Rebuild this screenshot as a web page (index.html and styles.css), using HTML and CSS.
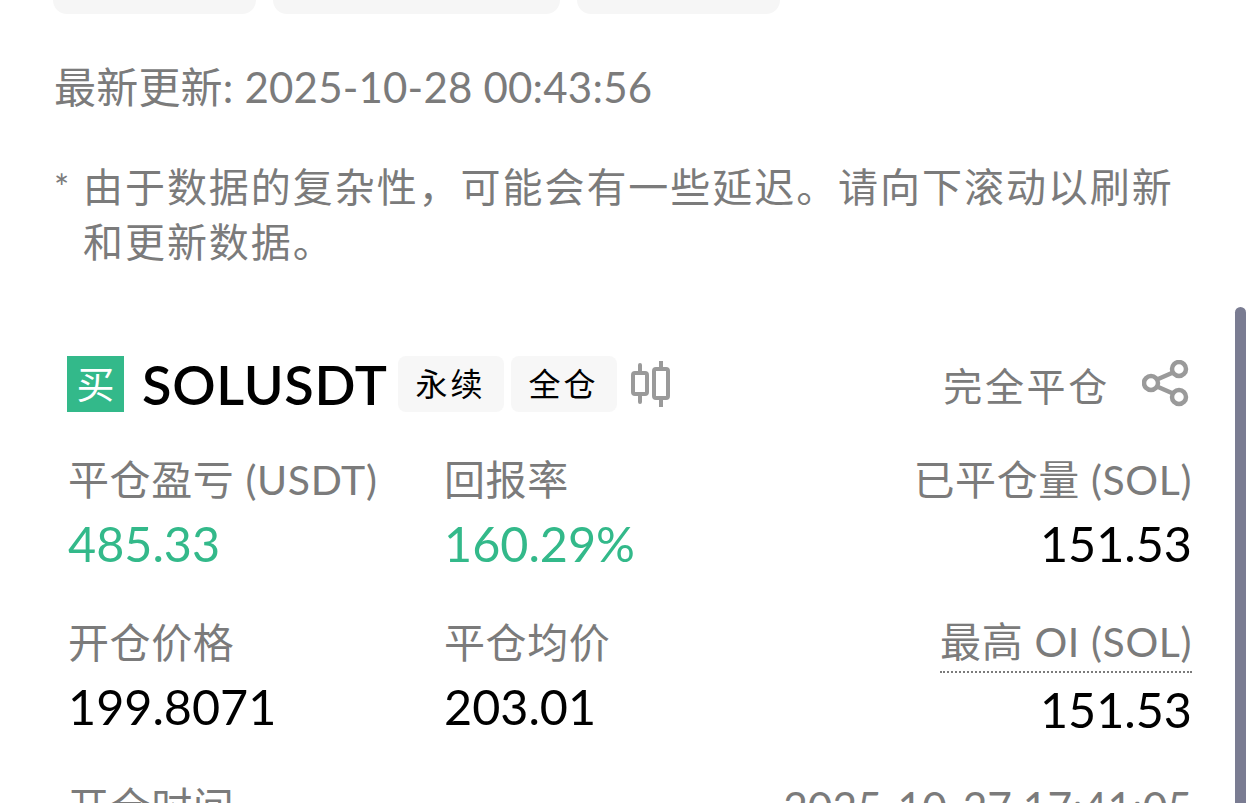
FILE: index.html
```html
<!DOCTYPE html>
<html lang="zh-CN">
<head>
  <meta charset="UTF-8" />
  <title>平仓详情</title>
  <link rel="stylesheet" href="styles.css">
</head>
<body>
  <div class="tabs">
    <div class="tab tab-a"></div>
    <div class="tab tab-b"></div>
    <div class="tab tab-a"></div>
  </div>

  <p class="updated">最新更新: 2025-10-28 00:43:56</p>

  <div class="note">
    <span class="star">*</span>
    <p>由于数据的复杂性，可能会有一些延迟。请向下滚动以刷新和更新数据。</p>
  </div>

  <div class="card">
    <div class="head">
      <span class="side">买</span>
      <span class="symbol">SOLUSDT</span>
      <span class="chip">永续</span>
      <span class="chip">全仓</span>
      <svg class="candle" width="42" height="46" viewBox="0 0 42 46" fill="none" stroke="#9a9a9a" stroke-width="4">
        <path d="M10 4v8M10 33v8M31 0v8M31 37v9" stroke-linecap="round"/>
        <rect x="3" y="12" width="14" height="21" rx="2"/>
        <rect x="24" y="8" width="14" height="29" rx="2"/>
      </svg>
      <span class="close-all">完全平仓</span>
      <svg class="share" width="48" height="48" viewBox="0 0 48 48" fill="none" stroke="#9a9a9a" stroke-width="4.5">
        <circle cx="37" cy="9" r="7"/>
        <circle cx="37" cy="37" r="7"/>
        <circle cx="9" cy="23" r="7"/>
        <path d="M15 19.5 31 12.5M15 26.5 31 33.5"/>
      </svg>
    </div>

    <div class="stats">
      <div class="stat">
        <span class="label">平仓盈亏 (USDT)</span>
        <span class="value up">485.33</span>
      </div>
      <div class="stat">
        <span class="label">回报率</span>
        <span class="value up">160.29%</span>
      </div>
      <div class="stat right">
        <span class="label">已平仓量 (SOL)</span>
        <span class="value">151.53</span>
      </div>
      <div class="stat">
        <span class="label">开仓价格</span>
        <span class="value">199.8071</span>
      </div>
      <div class="stat">
        <span class="label">平仓均价</span>
        <span class="value">203.01</span>
      </div>
      <div class="stat right">
        <span class="label dotted">最高 OI (SOL)</span>
        <span class="value">151.53</span>
      </div>
    </div>

    <div class="time-row">
      <span class="label">开仓时间</span>
      <span class="value">2025-10-27 17:41:05</span>
    </div>
  </div>

  <div class="scrollbar"></div>
</body>
</html>
```

FILE: styles.css
```css
html, body {
  height: 803px;
  overflow: hidden;
}
body {
  margin: 0;
  position: relative;
  background: #fff;
  font-family: Lato, "Noto Sans CJK SC", sans-serif;
  color: #000;
}
p {
  margin: 0;
}
.tabs {
  display: flex;
  gap: 17px;
  height: 14px;
  padding-left: 53px;
}
.tab {
  background: #f6f6f6;
  border-radius: 0 0 22px 22px;
}
.tab-a {
  width: 203px;
}
.tab-b {
  width: 287px;
}
.updated {
  margin: 46px 0 0 54px;
  font-size: 42px;
  line-height: 54px;
  letter-spacing: .2px;
  color: #7b7b7b;
}
.note {
  display: flex;
  margin: 46px 60px 0 54px;
  font-size: 40px;
  line-height: 55px;
  color: #7b7b7b;
}
.star {
  width: 29px;
  flex: none;
  font-size: 36px;
}
.note p {
  letter-spacing: 1.95px;
}
.card {
  margin: 0 68px;
  padding-top: 85px;
}
.head {
  display: flex;
  align-items: center;
  height: 58px;
}
.side {
  width: 57px;
  height: 56px;
  line-height: 54px;
  text-align: center;
  background: #33b98a;
  color: #fff;
  font-size: 38px;
  margin-left: -1px;
}
.symbol {
  margin-left: 18px;
  font-size: 54px;
  font-weight: 600;
  letter-spacing: .7px;
}
.chip {
  width: 106px;
  height: 56px;
  line-height: 56px;
  margin-left: 7px;
  text-align: center;
  background: #f7f7f7;
  border-radius: 8px;
  font-size: 32px;
  letter-spacing: 3px;
}
.symbol + .chip {
  margin-left: 10px;
}
.candle {
  margin-left: 13px;
}
.close-all {
  margin-left: auto;
  font-size: 39px;
  letter-spacing: 2.7px;
  color: #7b7b7b;
}
.share {
  margin-left: 32px;
  margin-right: 2px;
}
.stats {
  display: grid;
  grid-template-columns: 376px 1fr auto;
  row-gap: 40px;
  margin-top: 39px;
}
.stat {
  display: flex;
  flex-direction: column;
  align-items: flex-start;
}
.stat.right {
  align-items: flex-end;
}
.label {
  font-size: 41px;
  line-height: 56px;
  letter-spacing: .6px;
  color: #7b7b7b;
}
.value {
  margin-top: 3px;
  font-size: 48.5px;
  line-height: 64px;
}
.up {
  color: #33b98a;
}
.dotted {
  line-height: 52px;
  padding-bottom: 3px;
  border-bottom: 2px dotted #7b7b7b;
  margin-top: 1px;
  margin-bottom: 1px;
}
.time-row {
  display: flex;
  justify-content: space-between;
  margin-top: 38px;
}
.time-row .value {
  margin-top: 0;
  font-size: 42.5px;
  color: #7b7b7b;
  line-height: 56px;
}
.scrollbar {
  position: absolute;
  left: 1235px;
  top: 307px;
  bottom: 0;
  width: 11px;
  background: #7a7c92;
  border-radius: 6px 6px 0 0;
}
```
